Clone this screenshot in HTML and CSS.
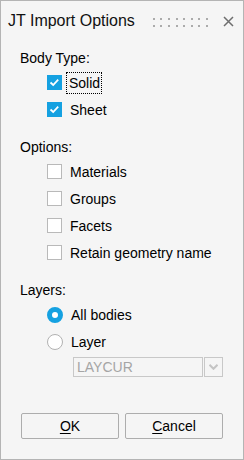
FILE: index.html
```html
<!DOCTYPE html>
<html>
<head>
<meta charset="utf-8">
<link rel="stylesheet" href="styles.css">
</head>
<body>
<div class="dialog">
  <div class="titlebar">
    <span class="title">JT Import Options</span>
    <div class="grip">
      <i></i><i></i><i></i><i></i><i></i><i></i><i></i><i></i>
      <i></i><i></i><i></i><i></i><i></i><i></i><i></i><i></i>
    </div>
    <svg class="close" width="11" height="11" viewBox="0 0 11 11"><path d="M1 1 L10 10 M10 1 L1 10" stroke="#6e6e6e" stroke-width="1.5" fill="none"/></svg>
  </div>

  <div class="section section-body">
    <div class="label">Body Type:</div>
    <div class="row">
      <span class="cb checked"><svg width="15" height="15" viewBox="0 0 15 15"><path d="M3.5 7.5 L6.2 10 L11.2 4.6" stroke="#fff" stroke-width="1.8" fill="none"/></svg></span>
      <span class="text focus">Solid</span>
    </div>
    <div class="row">
      <span class="cb checked"><svg width="15" height="15" viewBox="0 0 15 15"><path d="M3.5 7.5 L6.2 10 L11.2 4.6" stroke="#fff" stroke-width="1.8" fill="none"/></svg></span>
      <span class="text">Sheet</span>
    </div>
  </div>

  <div class="section section-options">
    <div class="label">Options:</div>
    <div class="row"><span class="cb"></span><span class="text">Materials</span></div>
    <div class="row"><span class="cb"></span><span class="text">Groups</span></div>
    <div class="row"><span class="cb"></span><span class="text">Facets</span></div>
    <div class="row"><span class="cb"></span><span class="text">Retain geometry name</span></div>
  </div>

  <div class="section section-layers">
    <div class="label">Layers:</div>
    <div class="row"><span class="radio on"></span><span class="text">All bodies</span></div>
    <div class="row"><span class="radio"></span><span class="text">Layer</span></div>
    <div class="combo">
      <div class="combo-field">LAYCUR</div>
      <div class="combo-btn"><svg width="9" height="6" viewBox="0 0 9 6"><path d="M0.5 0.8 L4.5 4.8 L8.5 0.8" stroke="#c4c4c4" stroke-width="2" fill="none"/></svg></div>
    </div>
  </div>

  <div class="buttons">
    <button class="btn"><u>O</u>K</button>
    <button class="btn"><u>C</u>ancel</button>
  </div>
</div>
</body>
</html>
```

FILE: styles.css
```css
html, body {
  margin: 0;
  padding: 0;
  background: #f5f5f5;
}
.dialog {
  box-sizing: border-box;
  width: 244px;
  height: 460px;
  border: 1px solid #b4b4b4;
  background: #f5f5f5;
  font-family: "Liberation Sans", Arial, sans-serif;
  font-size: 14px;
  color: #000;
  display: flex;
  flex-direction: column;
}
.titlebar {
  height: 40px;
  display: flex;
  align-items: center;
  padding-left: 7px;
}
.title {
  font-size: 16px;
  line-height: 18px;
  color: #111;
}
.grip {
  margin-left: 18px;
  display: grid;
  grid-template-columns: repeat(8, 2px);
  grid-template-rows: repeat(2, 2px);
  column-gap: 5.6px;
  row-gap: 5px;
  margin-top: 2px;
}
.grip i {
  display: block;
  width: 2px;
  height: 2px;
  background: #ababab;
}
.close {
  margin-left: 15px;
  margin-top: 1px;
}
.section {
  padding-left: 19px;
  display: flex;
  flex-direction: column;
}
.section-body { margin-top: 9px; }
.section-options { margin-top: 16px; }
.section-layers { margin-top: 16px; }
.label {
  line-height: 16px;
  height: 16px;
  margin-bottom: 3px;
}
.row {
  height: 27px;
  display: flex;
  align-items: center;
  padding-left: 27px;
}
.section-options .row:first-of-type { margin-top: 1px; }
.text {
  line-height: 16px;
  margin-left: 8px;
}
.focus {
  outline: 1px dotted #000;
  outline-offset: 0;
  padding: 2px 1px 2px 2px;
  margin-left: 5px;
}
.cb {
  box-sizing: border-box;
  width: 15px;
  height: 15px;
  border: 1px solid #b9b9b9;
  background: #fff;
  display: block;
}
.cb.checked {
  border: none;
  background: #15a1e1;
}
.cb svg { display: block; }
.radio {
  box-sizing: border-box;
  width: 16px;
  height: 16px;
  border-radius: 50%;
  border: 1px solid #b2b2b2;
  background: #fff;
  display: block;
}
.radio.on {
  border: 5px solid #15a1e1;
  background: #fff;
}
.combo {
  display: flex;
  margin-left: 53px;
  margin-top: 2px;
  height: 20px;
  gap: 1px;
}
.combo-field {
  box-sizing: border-box;
  width: 130px;
  height: 20px;
  border: 1px solid #c8c8c8;
  color: #a5a5a5;
  line-height: 18px;
  padding-left: 3px;
}
.combo-btn {
  box-sizing: border-box;
  width: 19px;
  height: 20px;
  border: 1px solid #c8c8c8;
  display: flex;
  align-items: center;
  justify-content: center;
}
.combo-btn svg { display: block; }
.buttons {
  margin-top: auto;
  margin-bottom: 20px;
  display: flex;
  gap: 6px;
  padding-left: 20px;
}
.btn {
  box-sizing: border-box;
  width: 98px;
  height: 26px;
  border: 1px solid #adadad;
  border-radius: 2px;
  background: #f5f5f5;
  font-family: "Liberation Sans", Arial, sans-serif;
  font-size: 14px;
  color: #000;
  padding: 0;
}
.btn u { text-decoration-thickness: 1px; text-underline-offset: 2px; }
```
